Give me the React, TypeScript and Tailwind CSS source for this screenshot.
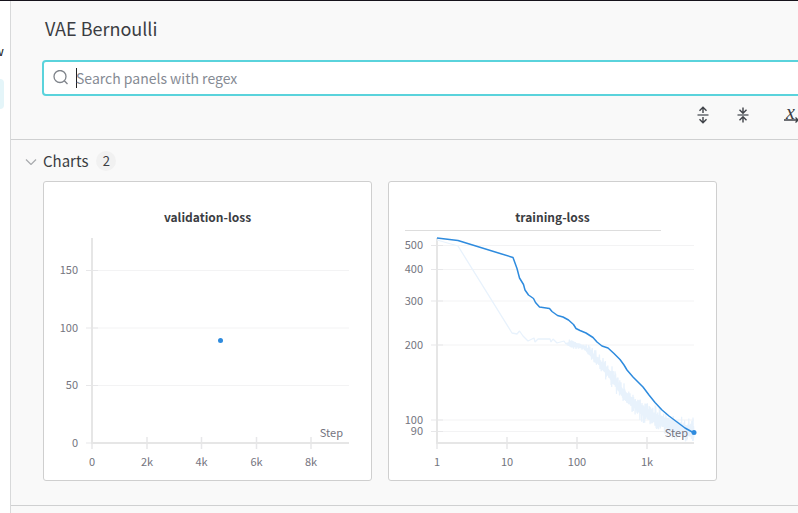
import React from "react";

type Point = [number, number];

const axisText = "fill-[#74747e] text-[11px] leading-3";

function toPath(points: Point[]) {
  return points.map(([x, y], i) => `${i ? "L" : "M"}${x.toFixed(1)} ${y.toFixed(1)}`).join("");
}

const smoothed: Point[] = [
  [48, 10], [69, 12.5], [124, 29.5], [128, 40.5], [130.5, 50], [134.5, 56.5], [136, 62], [139.5, 67], [144.5, 70.5],
  [146.5, 74.5], [150.5, 79], [160.5, 80.5], [163, 83.5], [168.5, 87.5], [174, 89], [179.5, 92], [184.5, 96.5],
  [187, 100.5], [191, 102.5], [197, 105], [204, 109.5], [208, 114], [213, 118], [219, 120], [225, 125.5], [231, 131.5],
  [235, 137], [238, 142], [244, 149], [254, 159], [260, 167], [266, 174.5], [273, 182], [280, 188], [288, 194],
  [296, 200], [305, 205],
];

const rawStart: Point[] = [
  [48, 12], [69, 18], [123, 105], [128, 106], [130.5, 103], [134, 108], [139, 113], [145, 110], [146, 114], [149, 111],
  [161, 111], [162, 114], [164, 111], [168, 115], [175, 113], [177, 116],
];

// centre and half height of the noisy part of the raw series
const rawBand: [number, number, number][] = [
  [178, 116, 3], [183, 116, 10], [187, 117, 6], [195, 119, 5], [201, 125, 8], [211, 135, 9], [223, 149, 11],
  [235, 167, 12], [250, 180, 12], [266, 190, 13], [281, 197, 14], [296, 202, 14], [305, 204, 16],
];

function buildRaw(): Point[] {
  const points = [...rawStart];
  let seed = 11;
  let side = 1;
  for (let x = 178; x <= 305; x += x < 215 ? 0.6 : 0.3) {
    const i = Math.max(1, rawBand.findIndex((b) => b[0] >= x));
    const a = rawBand[i - 1];
    const b = rawBand[i];
    const t = (x - a[0]) / (b[0] - a[0]);
    seed = (seed * 16807) % 2147483647;
    const r = seed / 2147483647;
    side = -side;
    const reach = a[2] + (b[2] - a[2]) * t;
    points.push([x, a[1] + (b[1] - a[1]) * t + side * reach * (0.35 + 0.65 * r ** 4)]);
  }
  return points;
}

const raw = buildRaw();

type Tick = { at: number; label: string };

function Axes({ xTicks, yTicks }: { xTicks: Tick[]; yTicks: Tick[] }) {
  return (
    <g>
      {yTicks.map((t) => (
        <g key={t.label}>
          <line x1="48" x2="305" y1={t.at} y2={t.at} stroke="#f3f3f4" />
          <line x1="42" x2="54" y1={t.at} y2={t.at} stroke="#e7e7e9" />
          <text x="34" y={Math.floor(t.at) + 4} textAnchor="end" className={axisText}>{t.label}</text>
        </g>
      ))}
      {xTicks.map((t, i) => (
        <g key={t.label}>
          <line x1={t.at} x2={t.at} y1={i ? 209 : 215} y2="221" stroke="#e7e7e9" strokeWidth="1.5" />
          <text x={t.at} y="238" textAnchor="middle" className={axisText}>{t.label}</text>
        </g>
      ))}
      <path d="M48 10V215H305" fill="none" stroke="#e6e6e6" strokeWidth="2" />
    </g>
  );
}

function Panel({ title, children }: { title: string; children: React.ReactNode }) {
  return (
    <article className="w-[329px] shrink-0 rounded-[3px] border border-[#cfcfcf] bg-white">
      <h3 className="h-[46px] pt-6 text-center text-[12px] leading-[22px] font-semibold">{title}</h3>
      <svg viewBox="0 0 327 252" className="block w-full" role="img" aria-label={title}>
        {children}
      </svg>
    </article>
  );
}

function ExpandIcon() {
  return (
    <svg width="12" height="18" viewBox="0 0 12 18" fill="none" stroke="#3f4248" strokeWidth="1.4">
      <path d="M0.5 9H11.5" stroke="#8a8d91" strokeWidth="2" />
      <path d="M6 7V1.500M2.500 4.800L6 1.300L9.500 4.800M6 11V16.500M2.500 13.200L6 16.700L9.500 13.200" />
    </svg>
  );
}

function CollapseIcon() {
  return (
    <svg width="12" height="18" viewBox="0 0 12 18" fill="none" stroke="#3f4248" strokeWidth="1.4">
      <path d="M0.5 9H11.5" stroke="#8a8d91" strokeWidth="2" />
      <path d="M6 1.500V7M2.500 3.700L6 7.200L9.500 3.700M6 16.500V11M2.500 14.300L6 10.800L9.500 14.300" />
    </svg>
  );
}

export default function App() {
  return (
    <div className="flex h-screen overflow-hidden border-t border-[#16131c] bg-[#f9f9f9] font-['Noto_Sans_CJK_SC',sans-serif] text-[#3b3d42]">
      <aside className="w-[11px] shrink-0 overflow-hidden border-r border-[#d8d9da] bg-white">
        <div className="mt-[38px] flex h-6 w-1 items-center justify-end text-[13px] leading-5 text-[#222]">w</div>
        <div className="mt-4 h-[30px] w-1 rounded-r-lg bg-[#e4f5f9]" />
      </aside>
      <main className="min-w-0 flex-1">
        <header className="border-b border-[#cfd0d1]">
          <h1 className="pt-3 pl-[34px] text-[18px] leading-[30px]">VAE Bernoulli</h1>
          <label className="mt-[17px] -mr-4 ml-[31px] flex h-9 items-center rounded border-2 border-[#5ad3dc] bg-white pl-2">
            <svg width="18" height="16" viewBox="0 0 18 16" fill="none" stroke="#7f848b" strokeWidth="1.3" aria-hidden="true">
              <circle cx="8" cy="6.500" r="6" />
              <path d="M12.300 10.800L15.500 14" />
            </svg>
            <span className="ml-1.5 h-5 w-px shrink-0 bg-[#222]" />
            <input
              aria-label="Search panels with regex"
              placeholder="Search panels with regex"
              className="-ml-px h-6 min-w-0 flex-1 text-[14px] leading-6 outline-none placeholder:text-[#868b94]"
            />
          </label>
          <div className="-mr-[5px] flex h-[43px] items-center justify-end gap-7 pb-1.5">
            <button aria-label="Expand all"><ExpandIcon /></button>
            <button aria-label="Collapse all"><CollapseIcon /></button>
            <button aria-label="X axis" className="ml-1.5 flex w-5 flex-col items-start pl-px font-['Liberation_Serif',serif] text-[20px] leading-[10px] italic">
              <span className="px-0.5">x</span>
              <svg width="16" height="6" viewBox="0 0 16 6" fill="none" stroke="#3f4248" strokeWidth="1.3">
                <path d="M0 3H14M11.500 0.500L14 3L11.500 5.500" />
              </svg>
            </button>
          </div>
        </header>
        <section className="border-b border-[#cfd0d1] pb-6">
          <button className="flex h-[41px] items-center pl-3.5 text-[15px] leading-6">
            <svg width="12" height="8" viewBox="0 0 12 8" fill="none" stroke="#a9abae" strokeWidth="1.2" aria-hidden="true">
              <path d="M1 2.500L6 7.500L11 2.500" />
            </svg>
            <span className="ml-1.5">Charts</span>
            <span className="ml-2 flex h-5 w-5 items-center justify-center rounded-full bg-[#f1f1f1] text-[13px] leading-5">2</span>
          </button>
          <div className="flex gap-4 pl-8">
            <Panel title="validation-loss">
              <Axes
                yTicks={[{ at: 42.5, label: "150" }, { at: 100, label: "100" }, { at: 157.5, label: "50" }, { at: 215, label: "0" }]}
                xTicks={[{ at: 48, label: "0" }, { at: 103, label: "2k" }, { at: 157.5, label: "4k" }, { at: 212.5, label: "6k" }, { at: 267, label: "8k" }]}
              />
              <circle cx="176.500" cy="112.500" r="2.500" fill="#2e8bde" />
              <text x="299" y="209" textAnchor="end" className={axisText}>Step</text>
            </Panel>
            <Panel title="training-loss">
              <path d="M16 2.500H272" stroke="#dddddd" />
              <Axes
                yTicks={[
                  { at: 17.5, label: "500" }, { at: 41.5, label: "400" }, { at: 73, label: "300" },
                  { at: 117, label: "200" }, { at: 192, label: "100" }, { at: 203.5, label: "90" },
                ]}
                xTicks={[{ at: 48, label: "1" }, { at: 118, label: "10" }, { at: 188, label: "100" }, { at: 258, label: "1k" }]}
              />
              <path d={toPath(raw)} fill="none" stroke="#e8f2fc" strokeWidth="1.3" strokeLinejoin="bevel" />
              <path d={toPath(smoothed)} fill="none" stroke="#2e8bde" strokeWidth="1.5" strokeLinejoin="round" />
              <circle cx="305" cy="204.500" r="2.500" fill="#2e8bde" />
              <text x="299" y="209" textAnchor="end" className={axisText}>Step</text>
            </Panel>
          </div>
        </section>
      </main>
    </div>
  );
}
